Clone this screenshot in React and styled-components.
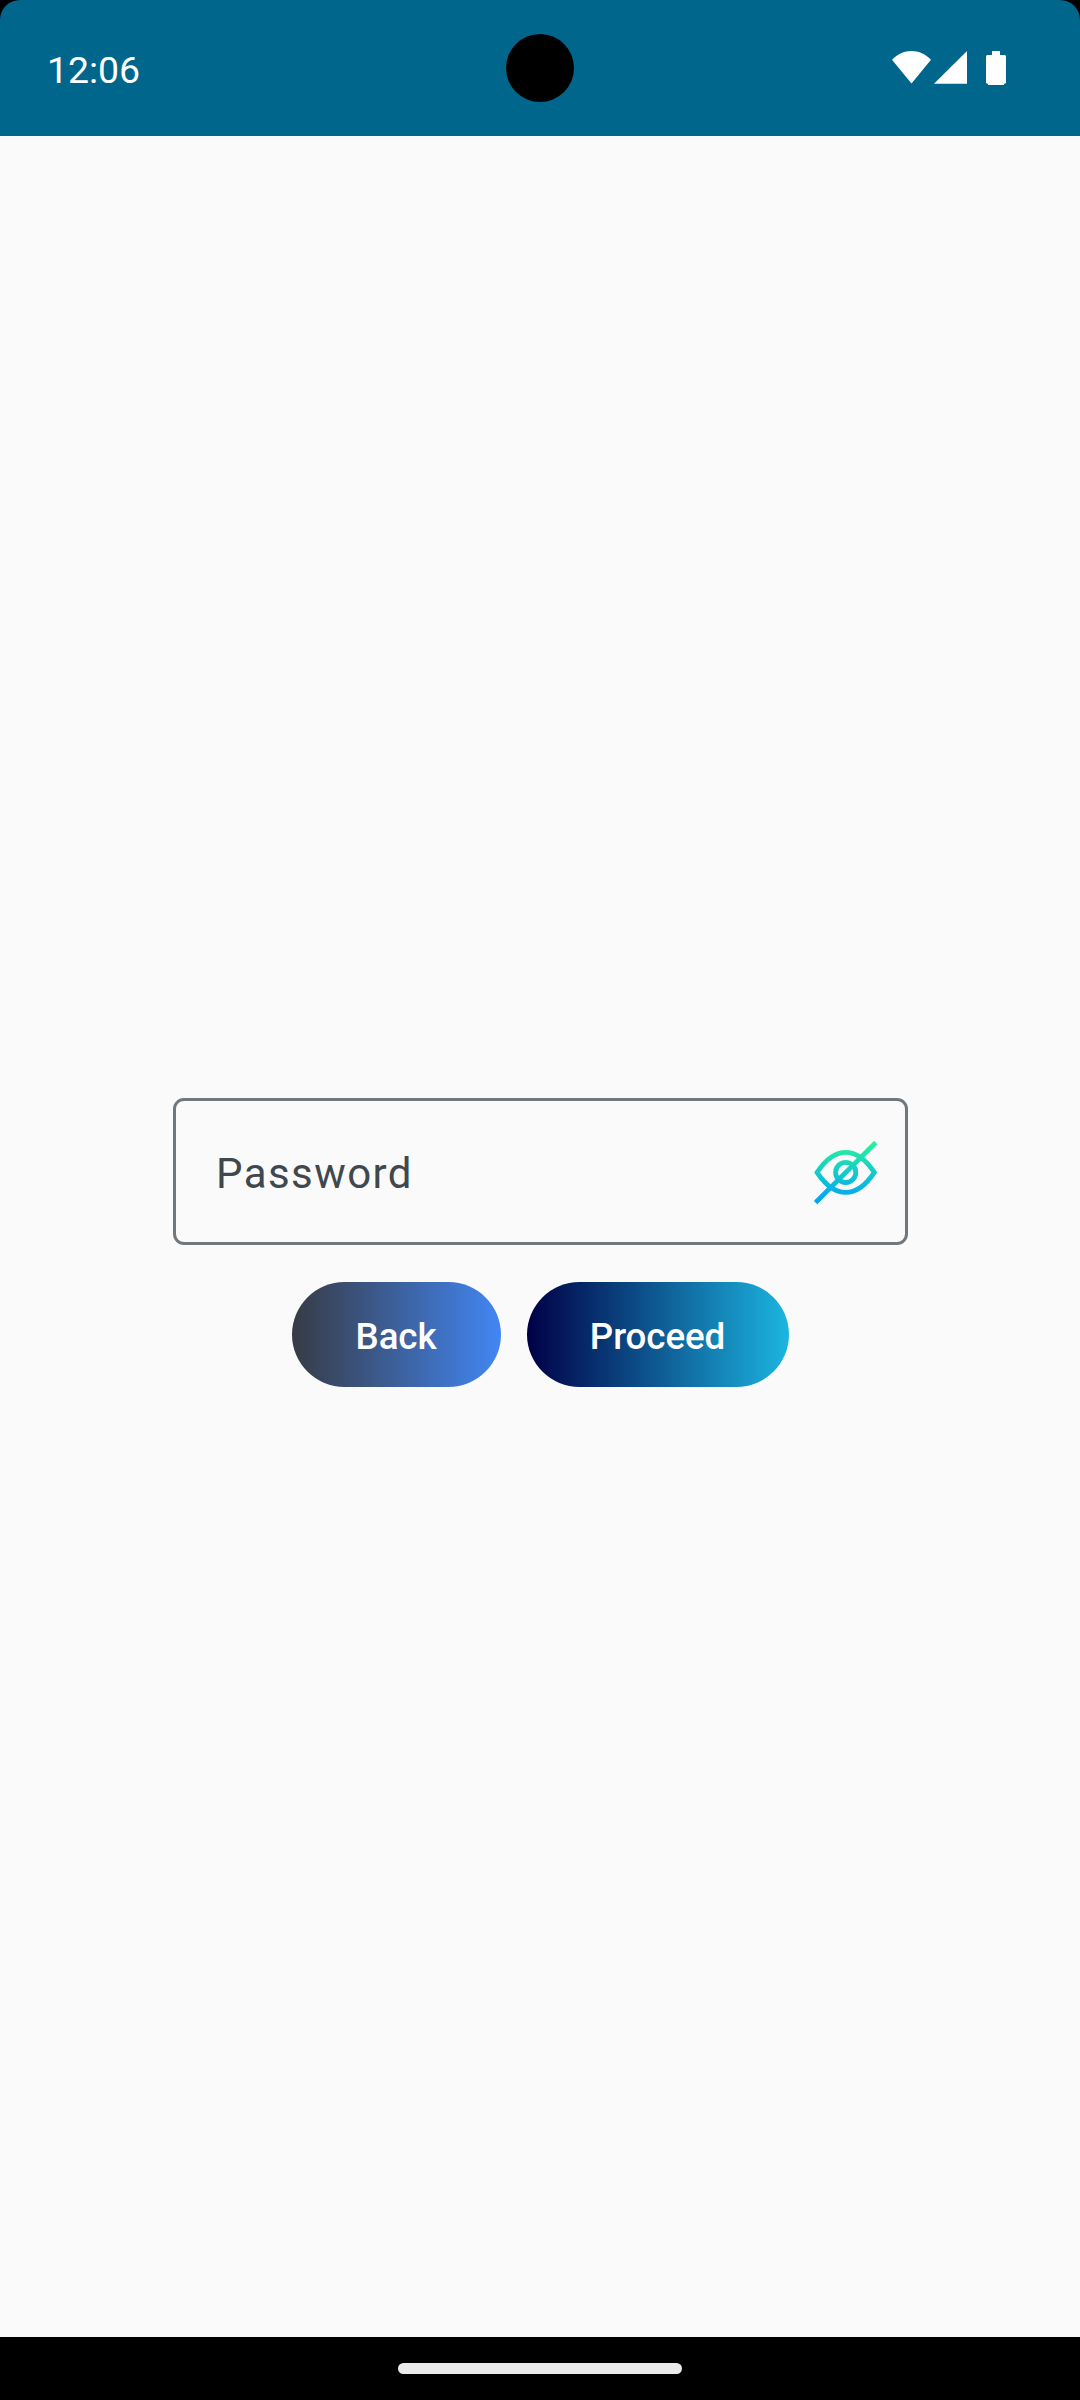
import React from "react";
import styled, { createGlobalStyle } from "styled-components";

const GlobalStyle = createGlobalStyle`
  * { box-sizing: border-box; }
  body { margin: 0; background: #000; font-family: Roboto, sans-serif; }
`;

const Screen = styled.div`
  display: flex;
  flex-direction: column;
  width: 1080px;
  height: 2400px;
  background: #000;
`;

const StatusBar = styled.header`
  display: grid;
  grid-template-columns: 1fr 68px 1fr;
  align-items: start;
  height: 136px;
  background: #00668b;
  border-radius: 20px 20px 0 0;
`;

const Clock = styled.time`
  padding: 48px 0 0 47px;
  font-size: 37.4px;
  line-height: 44px;
  color: #fff;
`;

const Camera = styled.div`
  width: 68px;
  height: 68px;
  margin-top: 34px;
  border-radius: 50%;
  background: #000;
`;

const StatusIcons = styled.div`
  display: flex;
  justify-content: flex-end;
  padding: 51px 74px 0 0;

  svg { display: block; fill: #fff; }
  svg + svg { margin-left: 3px; }
  svg:last-child { margin-left: 19px; }
`;

const Content = styled.main`
  flex: 1;
  display: flex;
  flex-direction: column;
  align-items: center;
  padding: 962px 0 0 1px;
  background: #fafafa;
`;

const Field = styled.label`
  display: flex;
  align-items: center;
  justify-content: space-between;
  width: 735px;
  height: 147px;
  padding: 3px 27px 0 40px;
  border: 3px solid #70787e;
  border-radius: 11px;
`;

const FieldLabel = styled.span`
  padding-top: 2px;
  font-size: 42px;
  line-height: 56px;
  letter-spacing: 1.42px;
  color: #41484d;
`;

const Actions = styled.div`
  display: flex;
  gap: 26px;
  margin-top: 37px;
`;

const PillButton = styled.button`
  width: ${(p) => p.$width}px;
  height: 105px;
  padding: 5px 1px 0 0;
  border: 0;
  border-radius: 53px;
  background: linear-gradient(90deg, ${(p) => p.$from}, ${(p) => p.$to});
  font: 500 36.75px/52px Roboto, sans-serif;
  letter-spacing: -0.12px;
  color: #fff;
`;

const NavBar = styled.footer`
  display: flex;
  justify-content: center;
  height: 63px;
  padding-top: 26px;
  background: #000;
`;

const Handle = styled.div`
  width: 284px;
  height: 11px;
  border-radius: 6px;
  background: #ebebeb;
`;

const WifiIcon = () => (
  <svg width="39" height="33" viewBox="0 0 39 33">
    <path d="M0 8.7C5.6 3 12 0 19.5 0S33.4 3 39 8.7L19.5 32.5Z" />
  </svg>
);

const SignalIcon = () => (
  <svg width="33" height="33" viewBox="0 0 33 33">
    <path d="M33 0V32.7H0Z" />
  </svg>
);

const BatteryIcon = () => (
  <svg width="20" height="34" viewBox="0 0 20 34">
    <path d="M6 0H14V4H19L20 5V32L18 33V34H2V33L0 32V5L1 4H6Z" />
  </svg>
);

const HiddenEyeIcon = () => (
  <svg width="64" height="64" viewBox="0 0 64 64" fill="none" stroke="url(#eye)" strokeWidth="4.8">
    <defs>
      <linearGradient id="eye" gradientUnits="userSpaceOnUse" x1="0" y1="0" x2="0" y2="64">
        <stop offset="0" stopColor="#2af598" />
        <stop offset="1" stopColor="#009efd" />
      </linearGradient>
    </defs>
    <path d="M3.1 31.4C11 19.4 21 11.4 31.7 11.4S52.4 19.4 60.3 31.4C52.4 43.4 42.4 51.4 31.7 51.4S11 43.4 3.1 31.4Z" />
    <circle cx="31.7" cy="31.4" r="10.1" />
    <path d="M1.6 61.5L61.8 1.5" />
  </svg>
);

export default function App() {
  return (
    <>
      <GlobalStyle />
      <Screen>
        <StatusBar>
          <Clock>12:06</Clock>
          <Camera />
          <StatusIcons>
            <WifiIcon />
            <SignalIcon />
            <BatteryIcon />
          </StatusIcons>
        </StatusBar>
        <Content>
          <Field>
            <FieldLabel>Password</FieldLabel>
            <HiddenEyeIcon />
          </Field>
          <Actions>
            <PillButton $width={209} $from="#373b44" $to="#4286f4">Back</PillButton>
            <PillButton $width={262} $from="#000046" $to="#1cb5e0">Proceed</PillButton>
          </Actions>
        </Content>
        <NavBar>
          <Handle />
        </NavBar>
      </Screen>
    </>
  );
}
